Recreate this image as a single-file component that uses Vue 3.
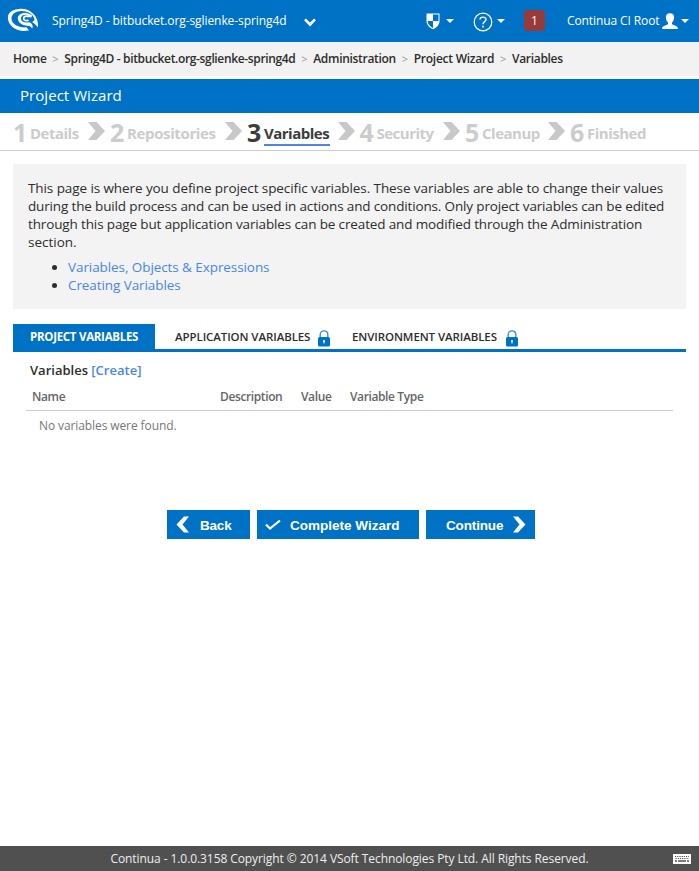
<script setup>
const crumbs = ['Home', 'Spring4D - bitbucket.org-sglienke-spring4d', 'Administration', 'Project Wizard', 'Variables']
const steps = ['Details', 'Repositories', 'Variables', 'Security', 'Cleanup', 'Finished']
const current = 2
const tabs = [
  { label: 'PROJECT VARIABLES', locked: false },
  { label: 'APPLICATION VARIABLES', locked: true },
  { label: 'ENVIRONMENT VARIABLES', locked: true },
]
</script>

<template>
  <div class="page">
    <header class="topbar">
      <svg class="logo" width="32" height="26" viewBox="0 0 32 26">
        <path fill="#fff" fill-rule="evenodd" d="M14 .8C6 .8 .8 4.500 .9 10C1 17 8 22.600 16 22.900L22 22.600L19.500 19.300C12 20 5.500 16.500 4.600 11.500C3.800 6.500 8.500 3 14.500 3C21.500 3 27 7 27.600 12L25.200 14.200C28 15.500 29.500 17.500 30.800 19.500C32.300 10 25 .8 14 .8Z" />
        <path d="M21.500 12C19.500 13.400 16.600 12.600 16.600 10.400C16.600 8.400 19 7.600 21.800 8.600" fill="none" stroke="#fff" stroke-width="1.700" />
        <path fill="#fff" d="M20.500 5.200L25 7.200L24.500 9.500L21 9L20.400 7C16.500 6 13.800 8 13.900 10.600C14 13.800 17.500 15.200 22.500 14.300C25.500 15.500 26.300 18.500 25.300 20.500L22.800 18C16 18.200 11 15 10.800 10.600C10.700 6.500 15 4 20.500 5.200Z" />
      </svg>
      <span class="project">Spring4D - bitbucket.org-sglienke-spring4d</span>
      <svg class="chevron" width="12" height="9" viewBox="0 0 12 9"><path d="M1 1.300L6 6.500L11 1.300" fill="none" stroke="#fff" stroke-width="2.600" /></svg>
      <div class="tools">
        <svg class="shield" width="14" height="17" viewBox="0 0 14 17">
          <path d="M.5 .5H13.500V8C13.500 12 10 15 7 16.300C4 15 .5 12 .5 8Z" fill="#fff" />
          <path d="M7 1.500H12.500V8H7ZM7 8V15C4 13.500 1.700 11 1.700 8Z" fill="#0072c6" />
        </svg>
        <i class="caret c1"></i>
        <svg class="help" width="20" height="20" viewBox="0 0 20 20" fill="none" stroke="#fff">
          <circle cx="10" cy="10" r="8.800" stroke-width="1.200" />
          <path d="M7 7.600C7.100 4.200 13.100 4.300 13 7.600C12.900 9.700 10 9.700 10 12.300" stroke-width="1.400" />
          <path d="M10 13.700V15.500" stroke-width="1.600" />
        </svg>
        <i class="caret c2"></i>
        <span class="badge">1</span>
        <span class="user">Continua CI Root</span>
        <svg class="person" width="16" height="17" viewBox="0 0 16 17"><path fill="#fff" d="M8 .3C11 .3 12.400 2.300 12.100 5C11.900 7 11 8.700 10 9.500V11.300L14.500 13.200C15.500 13.700 15.900 14.700 15.900 16H.1C.1 14.700 .5 13.700 1.500 13.200L6 11.300V9.500C5 8.700 4.100 7 3.900 5C3.600 2.300 5 .3 8 .3Z" /></svg>
        <i class="caret c3"></i>
      </div>
    </header>

    <nav class="crumbs">
      <template v-for="(c, i) in crumbs" :key="c">
        <span v-if="i" class="sep">&gt;</span>
        <span :class="['crumb', 'crumb' + i]">{{ c }}</span>
      </template>
    </nav>

    <h1 class="heading">Project Wizard</h1>

    <ol class="steps">
      <li v-for="(s, i) in steps" :key="s" :class="['step', 'step' + i, { current: i === current }]">
        <span class="num">{{ i + 1 }}</span>
        <span class="label">{{ s }}</span>
        <svg v-if="i < steps.length - 1" class="arrow" width="17" height="18" viewBox="0 0 17 18"><path d="M0 0H8.500L17 9L8.500 18H0L7.500 9Z" fill="#c8c8c8" /></svg>
      </li>
    </ol>

    <main>
      <section class="info">
        <p>
          <span class="l1">This page is where you define project specific variables. These variables are able to change their values</span>
          <span class="l2">during the build process and can be used in actions and conditions. Only project variables can be edited</span>
          <span class="l3">through this page but application variables can be created and modified through the Administration</span>
          <span>section.</span>
        </p>
        <ul>
          <li><a>Variables, Objects &amp; Expressions</a></li>
          <li><a>Creating Variables</a></li>
        </ul>
      </section>

      <div class="tabs">
        <div v-for="(t, i) in tabs" :key="t.label" :class="['tab', 'tab' + i, { active: i === 0 }]">
          <span>{{ t.label }}</span>
          <svg v-if="t.locked" class="lock" width="12" height="17" viewBox="0 0 12 17">
            <path d="M2.200 8V4.500C2.200 -.3 9.800 -.3 9.800 4.500V8" fill="none" stroke="#3c90d4" stroke-width="1.400" />
            <rect y="7" width="12" height="9.500" rx="1.500" fill="#0072c6" />
            <path d="M5 10.300H7V11.700H6.500V13.500H5.500V11.700H5Z" fill="#fff" />
          </svg>
        </div>
      </div>

      <h2 class="subhead">Variables <a>[Create]</a></h2>
      <div class="table">
        <div class="thead"><span>Name</span><span>Description</span><span>Value</span><span>Variable Type</span></div>
        <div class="empty">No variables were found.</div>
      </div>

      <div class="buttons">
        <button class="back">
          <svg width="13" height="17" viewBox="0 0 13 17"><path d="M8 .5H13L6.500 8.500L13 16.500H8L.5 8.500Z" fill="#fff" /></svg>
          <span>Back</span>
        </button>
        <button class="complete">
          <svg width="16" height="12" viewBox="0 0 16 12"><path d="M1 5.500L5 9.500L15 1.500" fill="none" stroke="#fff" stroke-width="2.200" /></svg>
          <span>Complete Wizard</span>
        </button>
        <button class="next">
          <span>Continue</span>
          <svg width="13" height="17" viewBox="0 0 13 17"><path d="M5 .5H0L6.500 8.500L0 16.500H5L12.500 8.500Z" fill="#fff" /></svg>
        </button>
      </div>
    </main>

    <footer>
      <span>Continua - 1.0.0.3158 Copyright © 2014 VSoft Technologies Pty Ltd. All Rights Reserved.</span>
      <svg class="keys" width="18" height="10" viewBox="0 0 18 10">
        <rect width="18" height="10" fill="#fff" />
        <path d="M2 2.500H16M2.500 4.500H16" stroke="#505050" stroke-dasharray="1.200 1" />
        <path d="M2 7H4M5 7H13M14 7H16" stroke="#505050" stroke-width="1.300" />
      </svg>
    </footer>
  </div>
</template>

<style>
body { margin: 0; background: #fff; }
</style>

<style scoped>
.page { display: flex; flex-direction: column; height: 871px; overflow: hidden; font-family: "Open Sans", sans-serif; color: #2d2d2d; white-space: nowrap; }
.topbar { display: flex; align-items: center; flex: none; height: 42px; background: #0072c6; color: #fff; font-size: 12px; box-sizing: border-box; padding: 0 10px 0 7px; }
.logo { margin: 0 13px 0 0; }
.project { letter-spacing: -.08px; width: 252px; line-height: 42px; height: 42px; }
.chevron { margin: 2px 0 0 .4px; }
.tools { display: flex; align-items: center; margin-left: auto; }
.caret { border: 4px solid transparent; border-top: 4px solid #fff; border-bottom: 0; }
.c1 { margin: 0 19px 0 6px; }
.c2 { margin: 0 19px 0 4px; }
.c3 { margin-left: 3px; }
.help { margin-top: 1px; }
.badge { width: 21px; height: 21px; line-height: 22px; margin: 0 22px 1px 0; border-radius: 3px; background: #983a3a; text-align: center; }
.user { letter-spacing: -.1px; width: 95px; height: 42px; line-height: 41px; }
.crumbs { display: flex; flex: none; height: 34px; line-height: 34px; padding-left: 13px; background: #f2f2f2; font-size: 12px; font-weight: 600; }
.crumb { letter-spacing: -.3px; }
.crumb1 { letter-spacing: -.35px; }
.crumb3 { letter-spacing: -.25px; }
.sep { width: 17.750px; text-align: center; color: #999; font-weight: 400; font-size: 11px; }
.heading { flex: none; margin: 3px 0 0; height: 34px; line-height: 33px; padding-left: 20px; background: #0072c6; color: #fff; font-size: 15px; font-weight: 400; letter-spacing: .05px; }
.steps { display: grid; flex: none; grid-template-columns: 97px 137px 112.500px 105.500px 105px 100px; height: 37px; margin: 0; padding: 0 0 0 13px; border-bottom: 1px solid #ccc; list-style: none; color: #ccc; font-weight: 700; }
.step { display: flex; align-items: flex-start; }
.num { width: 17px; font-size: 25px; line-height: 39px; letter-spacing: -1px; }
.label { height: 31px; line-height: 41px; font-size: 15px; letter-spacing: -.5px; }
.step1 .label { letter-spacing: -.37px; }
.arrow { margin: 9px 5px 0 auto; }
.current { color: #3c3c3c; }
.current .label { width: 66px; border-bottom: 2px solid #4a86e8; }
main { padding: 13px 13px 0; flex: 1; }
.info { background: #f3f3f3; height: 145px; box-sizing: border-box; padding: 15px 15px 0; font-size: 13.500px; line-height: 18px; }
.info p { margin: 0; display: flex; flex-direction: column; }
.l1 { letter-spacing: -.085px; }
.l2 { letter-spacing: -.15px; }
.l3 { letter-spacing: -.135px; }
.info ul { margin: 7px 0 0; padding-left: 40px; letter-spacing: -.08px; }
a { color: #4a86e8; }
.tabs { display: flex; height: 25px; margin-top: 15px; border-bottom: 3px solid #0072c6; font-size: 11.500px; font-weight: 600; line-height: 26px; letter-spacing: -.09px; }
.tab { display: flex; width: 177px; }
.tab.active { width: 125px; padding-left: 17px; margin-right: 20px; background: #0072c6; color: #fff; font-weight: 700; letter-spacing: -.28px; }
.lock { margin: 6px 0 0 8px; }
.tab2 .lock { margin-left: 9px; }
.subhead { margin: 8px 0 0 17px; font-size: 13px; line-height: 20px; font-weight: 600; }
.table { margin: 0 13px; color: #777; font-size: 12px; }
.thead { display: grid; grid-template-columns: 188px 81px 49px auto; padding-left: 6px; height: 30px; line-height: 34px; border-bottom: 1px solid #ccc; color: #666; font-weight: 600; letter-spacing: -.38px; }
.empty { padding-left: 13px; line-height: 29px; letter-spacing: -.1px; }
.buttons { display: flex; justify-content: center; gap: 7px; margin: 70px 0 0 3px; }
button { display: flex; align-items: center; height: 29px; padding: 0; border: 0; background: #0072c6; color: #fff; font: bold 13.500px "Liberation Sans", sans-serif; box-sizing: border-box; }
button span { padding-top: 2px; }
.back { width: 83px; padding-left: 9px; gap: 11px; letter-spacing: -.2px; }
.complete { width: 162px; padding-left: 8px; gap: 9px; }
.next { width: 109px; padding-left: 20px; gap: 9px; letter-spacing: -.15px; }
.next svg { margin-left: 1px; }
footer { position: relative; flex: none; height: 25px; line-height: 26px; text-align: center; background: #505050; color: #eee; font-size: 12px; letter-spacing: -.08px; }
.keys { position: absolute; right: 8px; top: 8px; }
</style>
